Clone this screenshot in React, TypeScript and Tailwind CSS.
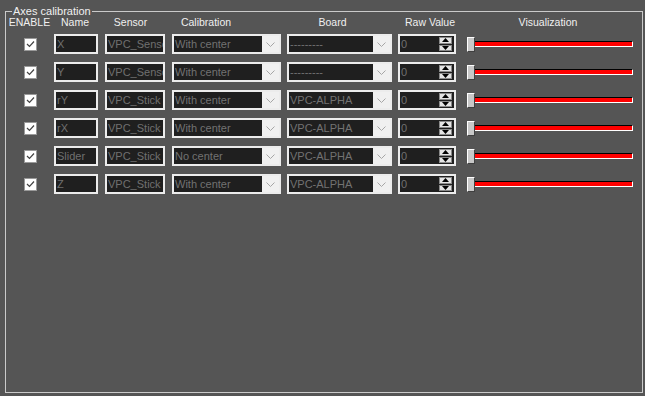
import React from 'react'

type Axis = {
  name: string
  sensor: string
  calibration: string
  board: string
}

const axes: Axis[] = [
  { name: 'X', sensor: 'VPC_Sensor', calibration: 'With center', board: '---------' },
  { name: 'Y', sensor: 'VPC_Sensor', calibration: 'With center', board: '---------' },
  { name: 'rY', sensor: 'VPC_Stick', calibration: 'With center', board: 'VPC-ALPHA' },
  { name: 'rX', sensor: 'VPC_Stick', calibration: 'With center', board: 'VPC-ALPHA' },
  { name: 'Slider', sensor: 'VPC_Stick', calibration: 'No center', board: 'VPC-ALPHA' },
  { name: 'Z', sensor: 'VPC_Stick', calibration: 'With center', board: 'VPC-ALPHA' },
]

function Checkbox() {
  return (
    <div className="flex h-[13px] w-[13px] items-center justify-center border border-[#9a9a9a] bg-white">
      <svg width="9" height="8" viewBox="0 0 9 8" fill="none">
        <path d="M1 4 L3.5 6.5 L8 1.5" stroke="#444" strokeWidth="1.2" />
      </svg>
    </div>
  )
}

function TextBox({ value, width }: { value: string; width: string }) {
  return (
    <div
      className={`${width} flex h-[20px] items-center overflow-hidden whitespace-nowrap border-2 border-[#ececec] bg-[#1f1f1f] pl-[1px] text-[#707070]`}
    >
      {value}
    </div>
  )
}

function Combo({ value, width }: { value: string; width: string }) {
  return (
    <div className={`${width} flex h-[20px] border-2 border-[#ececec] bg-[#f0f0f0]`}>
      <div className="flex flex-1 items-center overflow-hidden whitespace-nowrap bg-[#1f1f1f] pl-[1px] text-[#727272]">
        {value}
      </div>
      <div className="flex w-[17px] items-center justify-center">
        <svg width="9" height="5" viewBox="0 0 9 5" fill="none">
          <path d="M0.5 0.5 L4.5 4.5 L8.5 0.5" stroke="#a6a6a6" strokeWidth="1" />
        </svg>
      </div>
    </div>
  )
}

function SpinBox() {
  return (
    <div className="flex h-[20px] w-[58px] border-2 border-[#ececec] bg-[#1f1f1f] pr-[2px]">
      <div className="flex flex-1 items-center pl-[1px] text-[#707070]">0</div>
      <div className="flex w-[13px] flex-col justify-center gap-px py-px">
        <div className="flex h-[7px] items-center justify-center border border-[#8a8a8a] bg-[#e4e4e4]">
          <svg width="7" height="4" viewBox="0 0 7 4">
            <path d="M0 4 L3.5 0 L7 4 Z" fill="#000" />
          </svg>
        </div>
        <div className="flex h-[7px] items-center justify-center border border-[#8a8a8a] bg-[#e4e4e4]">
          <svg width="7" height="4" viewBox="0 0 7 4">
            <path d="M0 0 L3.5 4 L7 0 Z" fill="#000" />
          </svg>
        </div>
      </div>
    </div>
  )
}

function Slider() {
  return (
    <div className="flex h-[20px] w-[166px] items-center">
      <div className="h-[15px] w-[8px] border-t border-l border-t-white border-l-white border-r border-b border-r-[#404040] border-b-[#404040] bg-[#c8c8c8]" />
      <div className="h-[6px] flex-1 border-t border-t-black border-b border-b-white border-r border-r-white bg-[#ff0000]" />
    </div>
  )
}

export default function App() {
  return (
    <div
      className="h-[396px] w-[645px] bg-[#555555] pt-[11px] pl-[5px] text-[11px] leading-[13px]"
      style={{ fontFamily: '"Liberation Sans", Arial, sans-serif' }}
    >
      <div className="relative h-[382px] w-[638px] border border-[#cacaca]">
        <span className="absolute -top-[7px] left-[6px] bg-[#555555] px-px text-[#f0f0f0]">
          Axes calibration
        </span>

        <div className="mt-[4px] flex h-[13px] text-[10.5px] text-[#f0f0f0] whitespace-nowrap">
          <div className="flex w-[47px] justify-center">ENABLE</div>
          <div className="flex w-[44px] justify-center">Name</div>
          <div className="flex w-[67px] justify-center">Sensor</div>
          <div className="ml-[2px] flex w-[80px] justify-center">Calibration</div>
          <div className="ml-[46px] flex w-[81px] justify-center">Board</div>
          <div className="ml-[27px] flex w-[60px] justify-center">Raw Value</div>
          <div className="ml-[38px] flex w-[100px] justify-center">Visualization</div>
        </div>

        <div className="mt-[5px] flex flex-col gap-[8px]">
          {axes.map((a) => (
            <div key={a.name} className="flex h-[20px] items-center">
              <div className="flex w-[48px] items-center pl-[18px]">
                <Checkbox />
              </div>
              <TextBox value={a.name} width="w-[44px]" />
              <div className="ml-[7px]">
                <TextBox value={a.sensor} width="w-[60px]" />
              </div>
              <div className="ml-[7px]">
                <Combo value={a.calibration} width="w-[109px]" />
              </div>
              <div className="ml-[6px]">
                <Combo value={a.board} width="w-[105px]" />
              </div>
              <div className="ml-[6px]">
                <SpinBox />
              </div>
              <div className="ml-[11px]">
                <Slider />
              </div>
            </div>
          ))}
        </div>
      </div>
    </div>
  )
}
